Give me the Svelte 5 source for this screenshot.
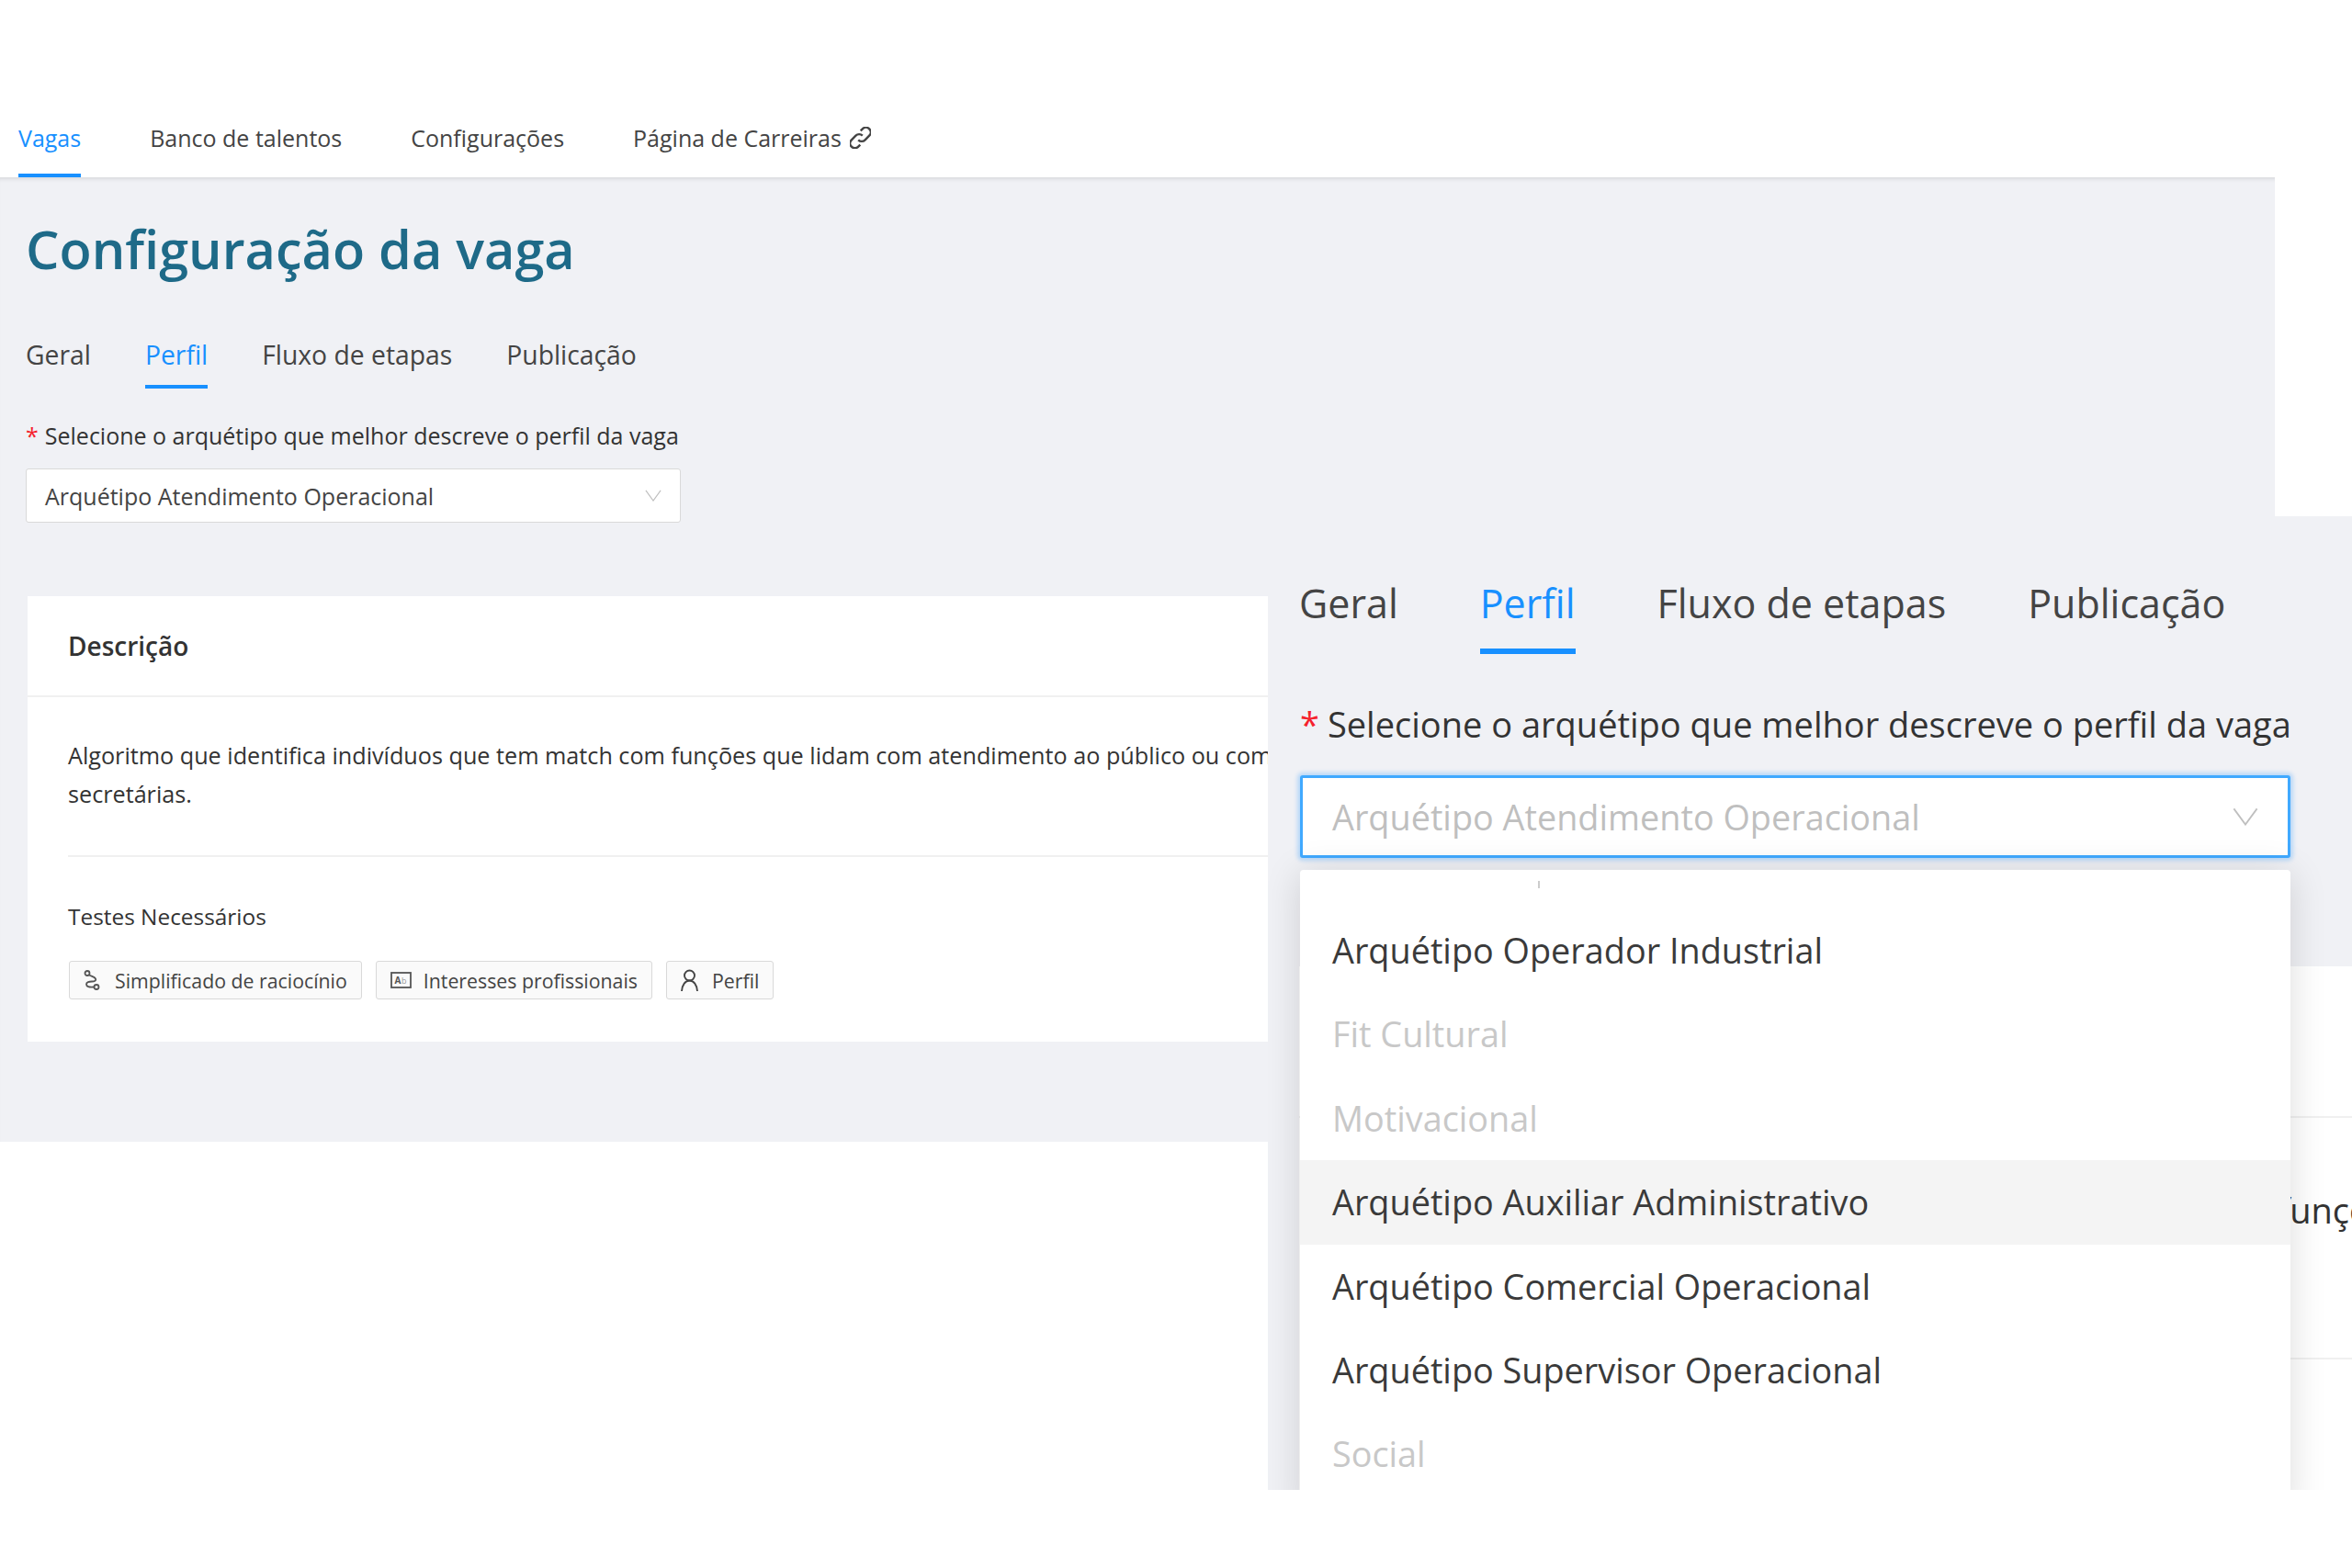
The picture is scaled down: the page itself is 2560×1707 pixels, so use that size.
<script>
const navItems = ['Vagas', 'Banco de talentos', 'Configurações'];
const tabs = ['Geral', 'Perfil', 'Fluxo de etapas', 'Publicação'];
const options = [
  { name: 'Arquétipo Operador Industrial' },
  { name: 'Fit Cultural', disabled: true },
  { name: 'Motivacional', disabled: true },
  { name: 'Arquétipo Auxiliar Administrativo', hover: true },
  { name: 'Arquétipo Comercial Operacional' },
  { name: 'Arquétipo Supervisor Operacional' },
  { name: 'Social', disabled: true }
];
const label = 'Selecione o arquétipo que melhor descreve o perfil da vaga';
const selected = 'Arquétipo Atendimento Operacional';
const line1 = 'Algoritmo que identifica indivíduos que tem match com funções que lidam com atendimento ao público ou com clientes, como recepcionistas e';
</script>

{#snippet chevron()}
  <svg class="chevron" viewBox="0 0 20 14" fill="none" stroke="currentColor" stroke-width="1.3" preserveAspectRatio="none">
    <path d="M1 1l9 12 9-12" />
  </svg>
{/snippet}

<header class="nav">
  {#each navItems as item, i}
    <span class="nav-item" class:active={i === 0}>{item}</span>
  {/each}
  <span class="nav-item">
    Página de Carreiras
    <svg class="link-icon" viewBox="2 2 20 20" fill="none" stroke="#444" stroke-width="2.1">
      <path d="M10 14a4.5 4.5 0 0 0 6.4 0l4-4a4.5 4.5 0 0 0-6.4-6.4l-1.800 1.800" />
      <path d="M14 10a4.5 4.5 0 0 0-6.4 0l-4 4a4.5 4.5 0 0 0 6.400 6.400l1.800-1.800" />
    </svg>
  </span>
</header>

<main class="page">
  <h1>Configuração da vaga</h1>

  <div class="tabs">
    {#each tabs as tab, i}
      <span class="tab" class:active={i === 1}>{tab}</span>
    {/each}
  </div>

  <div class="field-label"><span class="req">*</span>{label}</div>
  <div class="select">
    <span>{selected}</span>
    {@render chevron()}
  </div>

  <section class="card">
    <h2>Descrição</h2>
    <div class="card-body">
      <p class="desc">{line1}<br />secretárias.</p>
      <div class="tests">
        <div class="tests-title">Testes Necessários</div>
        <div class="tags">
          <span class="tag">
            <svg class="route" viewBox="0 0 18 22" fill="none" stroke="#555" stroke-width="1.8">
              <circle cx="4" cy="3.500" r="2.500" />
              <path d="M6 5.500c3 1.500 6 2 7 4s-1 3-4 3-6 .5-6 3 3 3.500 8 3" />
              <circle cx="14" cy="18.500" r="2.500" />
            </svg>
            Simplificado de raciocínio
          </span>
          <span class="tag">
            <svg class="box" viewBox="0 0 23 18" fill="none" stroke="#555" stroke-width="1.8">
              <rect x="1" y="1" width="21" height="16" />
              <text x="4.500" y="13" font-size="10" font-weight="700" fill="#555" stroke="none">A</text>
              <text x="12" y="13" font-size="9" fill="#999" stroke="none">b</text>
            </svg>
            Interesses profissionais
          </span>
          <span class="tag">
            <svg class="user" viewBox="0 0 19 24" fill="none" stroke="#444" stroke-width="1.900">
              <circle cx="9.500" cy="7" r="5.500" />
              <path d="M1 24c.5-7 4-11.500 8.500-11.500S17.500 17 18 24" />
            </svg>
            Perfil
          </span>
        </div>
      </div>
    </div>
  </section>
</main>

<div class="zoomed">
  <div class="tabs big-tabs">
    {#each tabs as tab, i}
      <span class="tab" class:active={i === 1}>{tab}</span>
    {/each}
  </div>
  <div class="field-label"><span class="req">*</span>{label}</div>
  <div class="select focused">
    <span>{selected}</span>
    {@render chevron()}
  </div>

  <section class="card big-card">
    <h2>Descrição</h2>
    <p class="desc">{line1}</p>
    <hr />
  </section>

  <div class="dropdown">
    <i class="tick"></i>
    <ul>
      {#each options as opt}
        <li class:disabled={opt.disabled} class:hover={opt.hover}>{opt.name}</li>
      {/each}
    </ul>
  </div>
</div>

<style>
:global(body) {
  margin: 0;
  background: #fff;
  font-family: "Open Sans", "Noto Sans", sans-serif;
  color: #333;
}

.nav {
  display: flex;
  gap: 75px;
  height: 193px;
  width: 2476px;
  padding-left: 20px;
  box-sizing: border-box;
  align-items: flex-end;
  font-size: 25px;
}

.nav-item {
  display: flex;
  align-items: center;
  gap: 9px;
  height: 72px;
  padding-bottom: 10px;
  box-sizing: border-box;
  border-bottom: 4px solid transparent;
  color: #444;
}

.nav-item.active {
  color: #1890ff;
  border-color: #1890ff;
}

.link-icon {
  width: 23px;
  height: 24px;
}

.page {
  width: 2476px;
  height: 1050px;
  box-sizing: border-box;
  padding: 36px 0 0 28px;
  background: #f0f1f5;
  box-shadow: inset 0 5px 4px -3px rgba(0, 0, 0, .1);
}

h1 {
  margin: 0;
  font-size: 57.600px;
  font-weight: 600;
  line-height: 84px;
  color: #1e6a88;
}

.tabs {
  display: flex;
  gap: 59px;
  margin-top: 47px;
  font-size: 28.300px;
}

.tab {
  height: 63px;
  line-height: 44px;
  padding-top: 4px;
  box-sizing: border-box;
  border-bottom: 4px solid transparent;
  color: #444;
}

.tab.active {
  color: #1890ff;
  border-color: #1890ff;
}

.field-label {
  margin-top: 33px;
  font-size: 25px;
  line-height: 36px;
  color: #333;
}

.req {
  color: #f5222d;
  margin-right: 7px;
}

.select {
  display: flex;
  justify-content: space-between;
  align-items: center;
  width: 713px;
  height: 59px;
  margin-top: 18px;
  padding: 0 20px;
  box-sizing: border-box;
  background: #fff;
  border: 1px solid #d9d9d9;
  border-radius: 3px;
  font-size: 25px;
  color: #444;
}

.chevron {
  width: 18px;
  height: 13px;
  color: #bfbfbf;
}

.card {
  width: 2420px;
  height: 485px;
  margin: 80px 0 0 2px;
  background: #fff;
  overflow: hidden;
}

.card h2 {
  margin: 0;
  padding: 0 44px;
  height: 108px;
  line-height: 108px;
  font-size: 28px;
  font-weight: 600;
  color: #333;
  border-bottom: 2px solid #f0f0f0;
}

.card-body {
  padding: 0 44px;
}

.desc {
  margin: 42px 0 0;
  font-size: 25.200px;
  line-height: 42px;
  white-space: nowrap;
  padding-bottom: 46px;
  border-bottom: 2px solid #f0f0f0;
}

.tests-title {
  margin-top: 47px;
  font-size: 24.400px;
  line-height: 36px;
}

.tags {
  display: flex;
  gap: 15px;
  margin: 30px 0 0 1px;
}

.tag {
  display: flex;
  align-items: center;
  gap: 13px;
  height: 42px;
  padding: 0 15px;
  box-sizing: border-box;
  background: #fafafa;
  border: 1px solid #d9d9d9;
  border-radius: 3px;
  font-size: 21.300px;
  color: #444;
}

.route {
  width: 18px;
  height: 22px;
  margin-right: 3px;
}

.box {
  width: 23px;
  height: 18px;
}

.user {
  width: 19px;
  height: 24px;
  margin-right: 2px;
}

/* enlarged crop laid over the page */
.zoomed {
  position: absolute;
  left: 1380px;
  top: 562px;
  width: 1180px;
  height: 1060px;
  padding-left: 34px;
  box-sizing: border-box;
  background: #f0f1f5;
  overflow: hidden;
}

.big-tabs {
  gap: 89px;
  margin-top: 50px;
  font-size: 43px;
}

.big-tabs .tab {
  height: 100px;
  line-height: 69px;
  padding-top: 10px;
  border-bottom-width: 6px;
}

.zoomed .field-label {
  margin: 48px 0 0 1px;
  font-size: 38px;
  line-height: 56px;
}

.zoomed .req {
  margin-right: 9px;
}

.select.focused {
  width: 1078px;
  height: 90px;
  margin: 28px 0 0 1px;
  padding: 0 32px;
  border: 3px solid #40a9ff;
  box-shadow: 0 0 4px 3px rgba(24, 144, 255, .25);
  font-size: 37.800px;
  color: #bfbfbf;
}

.focused .chevron {
  width: 28px;
  height: 20px;
}

.big-card {
  width: 1400px;
  height: 700px;
  margin: 118px 0 0 0;
}

.big-card h2 {
  height: 163px;
  line-height: 163px;
}

.big-card .desc {
  margin: 70px 0 0;
  padding: 0 0 0 75px;
  border: 0;
  font-size: 38px;
  line-height: 60px;
}

.big-card hr {
  margin: 131px 0 0 66px;
  border: 0;
  border-top: 2px solid #f0f0f0;
}

.dropdown {
  position: absolute;
  left: 35px;
  top: 385px;
  width: 1078px;
  height: 700px;
  background: #fff;
  border-radius: 4px;
  box-shadow: 0 4px 40px rgba(0, 0, 0, .14);
}

.tick {
  position: absolute;
  left: 259px;
  top: 12px;
  width: 2px;
  height: 8px;
  background: #ccc;
}

ul {
  list-style: none;
  margin: 0;
  padding: 42px 0 0;
}

li {
  height: 91.400px;
  line-height: 91.400px;
  padding-left: 35px;
  font-size: 37.800px;
  color: #3a3a3a;
}

li.disabled {
  color: #c8c8c8;
}

li.hover {
  background: #f4f4f4;
}
</style>
